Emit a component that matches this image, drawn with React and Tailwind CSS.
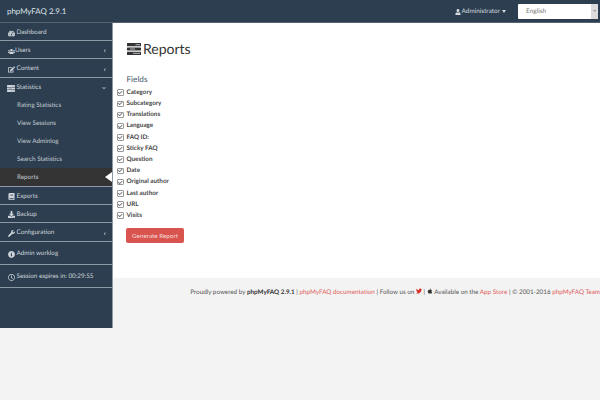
import {
  FaTachometerAlt,
  FaUsers,
  FaEdit,
  FaChevronLeft,
  FaChevronDown,
  FaBook,
  FaDownload,
  FaWrench,
  FaInfoCircle,
  FaRegClock,
  FaUser,
  FaTwitter,
  FaApple,
  FaCheck,
} from "react-icons/fa";

const fields = [
  "Category",
  "Subcategory",
  "Translations",
  "Language",
  "FAQ ID:",
  "Sticky FAQ",
  "Question",
  "Date",
  "Original author",
  "Last author",
  "URL",
  "Visits",
];

const subItems = ["Rating Statistics", "View Sessions", "View Adminlog", "Search Statistics"];

// old font-awesome "tasks": three bars with a lighter notch
function TasksIcon({ className }) {
  return (
    <svg viewBox="0 0 14 12" className={className} fill="currentColor">
      <rect x="0" y="0" width="14" height="3.2" rx="0.5" />
      <rect x="0" y="4.4" width="14" height="3.2" rx="0.5" />
      <rect x="0" y="8.8" width="14" height="3.2" rx="0.5" />
      <rect x="8.5" y="1" width="4.5" height="1.2" fill="#9aa0a6" />
      <rect x="3" y="5.4" width="5" height="1.2" fill="#9aa0a6" />
      <rect x="6" y="9.8" width="7" height="1.2" fill="#9aa0a6" />
    </svg>
  );
}

function MenuRow({ icon: Icon, label, arrow, className = "h-[18.4px]", labelClass = "" }) {
  return (
    <div className={`flex items-center pl-[7.5px] pr-[6px] pt-[3px] border-b border-[#8d9aa6] text-[#cfd5da] ${className}`}>
      <span className="flex items-center justify-center w-[7.5px] mr-[1.5px] shrink-0">
        <Icon className="h-[7px] w-auto max-w-[8px] shrink-0" />
      </span>
      <span className={`whitespace-nowrap ${labelClass}`}>{label}</span>
      {arrow === "left" && <FaChevronLeft className="ml-auto w-[3.5px] h-[3.5px]" />}
      {arrow === "down" && <FaChevronDown className="ml-auto w-[4px] h-[4px]" />}
    </div>
  );
}

function SubRow({ label, active }) {
  return (
    <div className={`relative flex items-center h-[18px] pl-[17px] pt-[3px] text-[#c5ccd2] ${active ? "bg-[#333333]" : ""}`}>
      {label}
      {active && (
        <span className="absolute right-0 top-[4px] border-y-[5px] border-y-transparent border-r-[7px] border-r-white" />
      )}
    </div>
  );
}

function Sidebar() {
  return (
    <aside className="w-[113px] h-[305px] shrink-0 bg-[#2c3e50] border-r border-[#8d9aa6] text-[6.3px] leading-none">
      <MenuRow icon={FaTachometerAlt} label="Dashboard" className="h-[18px]" />
      <MenuRow icon={FaUsers} label="Users" arrow="left" labelClass="-ml-[1.5px]" />
      <MenuRow icon={FaEdit} label="Content" arrow="left" />
      <MenuRow icon={TasksIcon} label="Statistics" arrow="down" className="h-[18px] border-b-0" />
      {subItems.map((item) => (
        <SubRow key={item} label={item} />
      ))}
      <SubRow label="Reports" active />
      <div className="border-t border-[#8d9aa6]" />
      <MenuRow icon={FaBook} label="Exports" className="h-[18px]" />
      <MenuRow icon={FaDownload} label="Backup" />
      <MenuRow icon={FaWrench} label="Configuration" arrow="left" />
      <MenuRow icon={FaInfoCircle} label="Admin worklog" className="h-[23px]" />
      <MenuRow icon={FaRegClock} label="Session expires in: 00:29:55" className="h-[23px]" />
    </aside>
  );
}

function Main() {
  return (
    <main className="flex-1 min-w-0 flex flex-col">
      <div className="h-[255px] bg-white pl-[13.5px] pt-[17px] text-[#444]">
        <h1 className="flex items-center text-[14px] leading-[18px] text-[#333] mb-[16px] h-[18px]">
          <TasksIcon className="w-[14px] h-[12px] mr-[2.5px] text-[#333]" />
          Reports
        </h1>
        <h2 className="text-[8.2px] leading-[10px] text-[#44586a] mb-[3px]">Fields</h2>
        <div className="-ml-[9.5px]">
          {fields.map((field) => (
            <div key={field} className="flex items-center h-[11.2px] text-[6.3px] font-bold text-[#444]">
              <span className="flex items-center justify-center w-[6.5px] h-[6.5px] border border-[#999] rounded-[1px] bg-white mr-[3px]">
                <FaCheck className="w-[5px] h-[5px] text-[#666]" />
              </span>
              {field}
            </div>
          ))}
        </div>
        <button className="-ml-[0.5px] mt-[2px] w-[58px] h-[15px] rounded-[2px] bg-[#d9534f] text-[6.3px] text-[#f6dcdb]">
          Generate Report
        </button>
      </div>
      <footer className="h-[50px] bg-[#f3f3f3] pt-[10px] text-[6.3px] leading-[9px] text-[#555] text-right whitespace-nowrap">
        Proudly powered by <strong className="text-[#333]">phpMyFAQ 2.9.1</strong> |{" "}
        <span className="text-[#e0605c]">phpMyFAQ documentation</span> | Follow us on{" "}
        <FaTwitter className="inline align-baseline w-[6px] h-[6px] text-[#d9332f]" /> |{" "}
        <FaApple className="inline align-baseline w-[6px] h-[6px] text-[#333]" /> Available on the{" "}
        <span className="text-[#e0605c]">App Store</span> | © 2001-2016{" "}
        <span className="text-[#e0605c]">phpMyFAQ Team</span>
      </footer>
    </main>
  );
}

export default function App() {
  return (
    <div className="w-[600px] h-[400px] overflow-hidden bg-[#f3f3f3] antialiased [text-rendering:geometricPrecision] font-['Lato','Liberation_Sans',sans-serif]">
      <header className="flex items-center h-[23px] bg-[#2c3e50] border-b border-[#55646f] pl-[7px] pr-[2px]">
        <span className="pt-[2px] text-[7.9px] text-[#dfe4e8]">phpMyFAQ 2.9.1</span>
        <div className="ml-auto pt-[2px] flex items-center text-[6.4px] text-[#d3d9de] mr-[12px]">
          <FaUser className="w-[6px] h-[6px] mr-[1px]" />
          Administrator
          <span className="ml-[2px] border-x-[2.5px] border-x-transparent border-t-[3px] border-t-[#d3d9de]" />
        </div>
        <div className="flex items-center justify-between w-[80px] h-[15px] bg-white rounded-[1px] pl-[8px] text-[6.5px] text-[#777]">
          <span className="pt-[1px]">English</span>
          <span className="flex items-center justify-center w-[7px] h-[15px] bg-[#dcdcdc]">
            <FaChevronDown className="w-[3.5px] h-[3.5px] text-[#555]" />
          </span>
        </div>
      </header>
      <div className="flex">
        <Sidebar />
        <Main />
      </div>
    </div>
  );
}
